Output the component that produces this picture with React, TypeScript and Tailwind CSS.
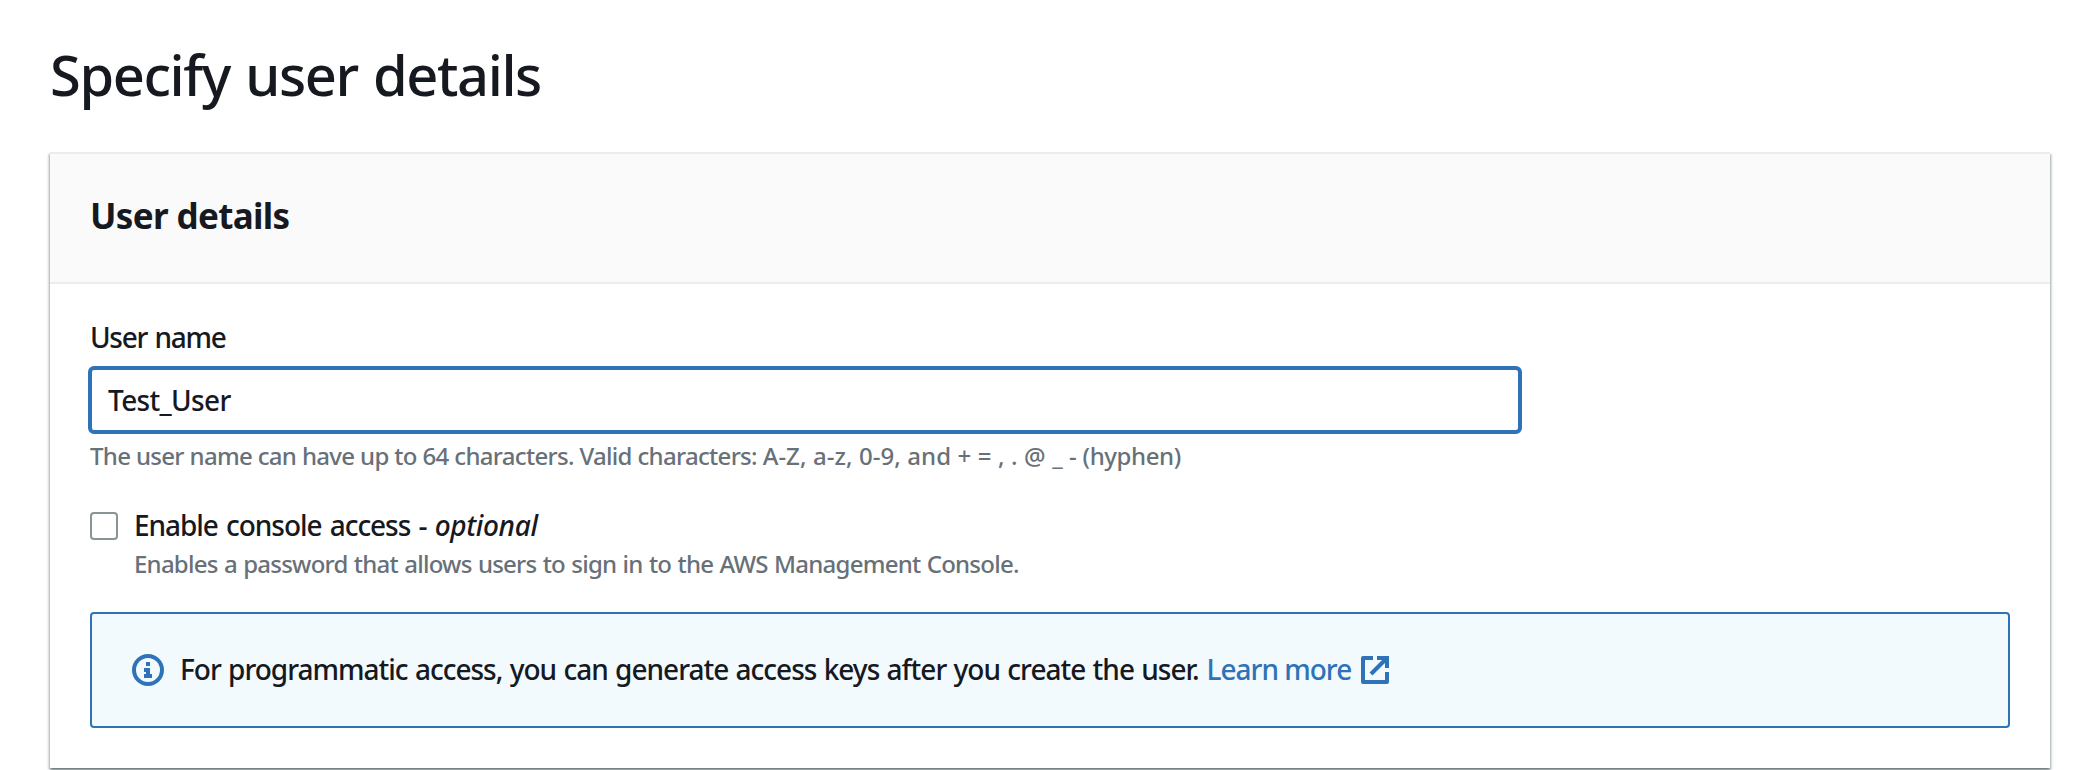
function InfoIcon() {
  return (
    <svg className="size-8 shrink-0" viewBox="0 0 32 32" fill="none">
      <circle cx="16" cy="16" r="14" stroke="#2e73b8" strokeWidth="4" />
      <path d="M14 8h4v4h-4zM12 14h6v6h2v4h-8v-4h2v-2h-2z" fill="#2e73b8" />
    </svg>
  );
}

function ExternalIcon() {
  return (
    <svg className="size-7 shrink-0" viewBox="0 0 28 28" fill="none" stroke="#2e73b8" strokeWidth="4">
      <path d="M12 2H2v24h24V16" strokeLinejoin="round" />
      <path d="M16 2h10v10" />
      <path d="M25 3L10 18" />
    </svg>
  );
}

export default function App() {
  return (
    <main className="h-[770px] overflow-hidden bg-white pl-[50px] pr-[36px] pt-[42px] font-['Noto_Sans',sans-serif] font-medium text-[#16191f]">
      <h1 className="h-16 text-[56px] font-medium leading-[64px] tracking-[-1.4px] [word-spacing:2px]">Specify user details</h1>

      <section className="mt-[46px] h-[616px] bg-white shadow-[0_2px_2px_0_rgba(0,28,36,0.4),2px_2px_2px_0_rgba(0,28,36,0.15),-2px_2px_2px_0_rgba(0,28,36,0.15)]">
        <header className="h-[132px] border-y-2 border-[#eaeded] bg-[#fafafa] px-10 pt-10">
          <h2 className="text-[35px] font-bold leading-[44px] tracking-[-0.65px]">User details</h2>
        </header>

        <div className="px-10 pt-8">
          <label htmlFor="username" className="block text-[28px] leading-[42px] tracking-[-1.3px] [word-spacing:1.5px]">
            User name
          </label>
          <input
            id="username"
            readOnly
            value="Test_User"
            className="-ml-0.5 mt-2 block h-[68px] w-[1434px] rounded-[6px] border-4 border-[#2e73b8] bg-white px-4 text-[28px] tracking-[-0.65px] outline-none"
          />
          <p className="mt-1.5 text-[24px] leading-8 tracking-[-0.7px] text-[#687078] [word-spacing:0.2px]">
            The user name can have up to 64 characters. Valid characters:{' '}
            <span className="tracking-[0.03px]">A-Z, a-z, 0-9, and + = , . @ _ -</span>{' '}
            <span className="tracking-[-0.4px]">(hyphen)</span>
          </p>

          <div className="mt-[33px] flex gap-4">
            <span className="mt-[7px] size-7 shrink-0 rounded-[4px] border-2 border-[#879596] bg-white" />
            <div>
              <p className="text-[28px] leading-10 tracking-[-1.05px] [word-spacing:2px]">
                Enable console access - <em className="tracking-[-0.35px]">optional</em>
              </p>
              <p className="mt-[3px] text-[24px] leading-8 tracking-[-0.76px] text-[#687078] [word-spacing:0.8px]">
                Enables a password that allows users to sign in to the AWS Management Console.
              </p>
            </div>
          </div>

          <div className="mt-8 flex h-[116px] items-center rounded-[4px] border-2 border-[#2e73b8] bg-[#f2fafd] px-10">
            <InfoIcon />
            <p className="ml-4 pb-0.5 text-[28px] leading-10 tracking-[-1px] [word-spacing:1.05px]">
              For programmatic access, you can generate access keys after you create the user.
            </p>
            <a className="ml-2 flex items-center gap-2.5 text-[28px] leading-10 tracking-[-1px] text-[#2e73b8]">
              <span className="pb-0.5">Learn more</span>
              <ExternalIcon />
            </a>
          </div>
        </div>
      </section>
    </main>
  );
}
